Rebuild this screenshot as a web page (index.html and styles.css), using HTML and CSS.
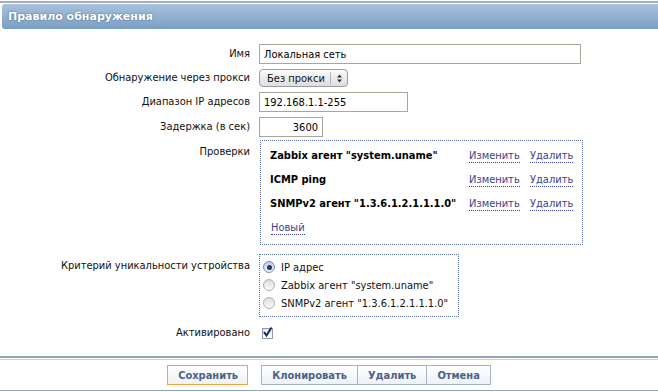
FILE: index.html
```html
<!DOCTYPE html>
<html lang="ru">
<head>
    <meta charset="UTF-8">
    <title>Правило обнаружения</title>
    <link rel="stylesheet" href="styles.css">
</head>
<body>
    <div class="top-rule"></div>
    <div class="header">Правило обнаружения</div>

    <div class="form">
        <div class="row">
            <div class="label">Имя</div>
            <div class="field"><input class="text name" type="text" value="Локальная сеть"></div>
        </div>
        <div class="row row-select">
            <div class="label">Обнаружение через прокси</div>
            <div class="field">
                <div class="select">
                    <span class="select-text">Без прокси</span>
                    <span class="select-arrows">
                        <svg width="7" height="9" viewBox="0 0 7 9"><path d="M3.5 0.5 L6 3.5 L1 3.5 Z M3.5 8.5 L6 5.5 L1 5.5 Z" fill="#333"/></svg>
                    </span>
                </div>
            </div>
        </div>
        <div class="row">
            <div class="label">Диапазон IP адресов</div>
            <div class="field"><input class="text iprange" type="text" value="192.168.1.1-255"></div>
        </div>
        <div class="row row-delay">
            <div class="label">Задержка (в сек)</div>
            <div class="field"><input class="text delay" type="text" value="3600"></div>
        </div>
        <div class="row row-box">
            <div class="label">Проверки</div>
            <div class="field">
                <div class="box checks">
                    <div class="check-name">Zabbix агент "system.uname"</div>
                    <div><a class="link" href="#">Изменить</a></div>
                    <div><a class="link" href="#">Удалить</a></div>
                    <div class="check-name">ICMP ping</div>
                    <div><a class="link" href="#">Изменить</a></div>
                    <div><a class="link" href="#">Удалить</a></div>
                    <div class="check-name">SNMPv2 агент "1.3.6.1.2.1.1.1.0"</div>
                    <div><a class="link" href="#">Изменить</a></div>
                    <div><a class="link" href="#">Удалить</a></div>
                    <div class="check-new"><a class="link" href="#">Новый</a></div>
                </div>
            </div>
        </div>
        <div class="row row-box row-criteria">
            <div class="label">Критерий уникальности устройства</div>
            <div class="field">
                <div class="box criteria">
                    <div class="radio-row"><span class="radio checked"></span>IP адрес</div>
                    <div class="radio-row"><span class="radio"></span>Zabbix агент "system.uname"</div>
                    <div class="radio-row"><span class="radio"></span>SNMPv2 агент "1.3.6.1.2.1.1.1.0"</div>
                </div>
            </div>
        </div>
        <div class="row row-active">
            <div class="label">Активировано</div>
            <div class="field">
                <span class="checkbox">
                    <svg width="11" height="11" viewBox="0 0 11 11"><path d="M2 5 L4.5 8.5 L9.5 0.5" fill="none" stroke="#1a2a66" stroke-width="2"/></svg>
                </span>
            </div>
        </div>
    </div>

    <div class="footer">
        <div class="footer-inner">
            <button class="btn btn-main">Сохранить</button>
            <div class="btn-group">
                <button class="btn">Клонировать</button>
                <button class="btn">Удалить</button>
                <button class="btn">Отмена</button>
            </div>
        </div>
    </div>
</body>
</html>
```

FILE: styles.css
```css
body, html {
    margin: 0;
    padding: 0;
    background-color: #fff;
    font-family: "DejaVu Sans Condensed", "DejaVu Sans", sans-serif;
    font-size: 11px;
    color: #111;
}
.top-rule {
    margin-top: 1px;
    height: 2px;
    background-color: #a3afc0;
}
.header {
    margin: 1px 0 0 2px;
    height: 25px;
    line-height: 25px;
    padding-left: 6px;
    border-radius: 3px 0 0 3px;
    background: linear-gradient(#a9c1da, #7a9fc4);
    color: #fff;
    font-family: "DejaVu Sans", sans-serif;
    font-weight: bold;
    font-size: 11px;
    text-shadow: 0 0 2px #3f5d80;
}
.form {
    padding-top: 15px;
}
.row {
    display: grid;
    grid-template-columns: 250px 1fr;
    column-gap: 9px;
    margin-bottom: 5px;
}
.label {
    text-align: right;
    line-height: 20px;
}
.field {
    display: flex;
    align-items: center;
}
.text {
    box-sizing: border-box;
    height: 20px;
    border: 1px solid #a8a698;
    padding: 0 4px;
    font-family: inherit;
    font-size: 11px;
    color: #000;
    outline: none;
}
.name { width: 322px; }
.iprange { width: 149px; }
.delay { width: 64px; text-align: right; }
.row-select .label { line-height: 18px; }
.select {
    box-sizing: border-box;
    width: 89px;
    height: 18px;
    border: 1px solid #9c9c9c;
    border-radius: 4px;
    background: linear-gradient(#fbfbfb, #dedede);
    display: flex;
    align-items: center;
}
.select-text {
    flex: 1;
    padding-left: 7px;
    color: #111;
}
.select-arrows {
    width: 16px;
    height: 12px;
    border-left: 1px solid #b5b5b5;
    display: flex;
    align-items: center;
    justify-content: center;
}
.row-delay { margin-bottom: 3px; }
.row-box .label { padding-top: 2px; }
.row-box .field { align-items: flex-start; }
.box {
    box-sizing: border-box;
    border: 1px dotted #5e72a8;
}
.checks {
    margin-left: 1px;
    width: 323px;
    padding: 2px 10px 5px 9px;
    display: grid;
    grid-template-columns: 199px 61px auto;
    grid-auto-rows: 24px;
    align-items: center;
}
.check-name {
    font-weight: bold;
    color: #000;
}
.check-new {
    grid-column: 1 / 4;
    padding-left: 1px;
}
.link {
    color: #3b3f8f;
    text-decoration: none;
    border-bottom: 1px dotted #3b3f8f;
}
.row-criteria { margin-top: 9px; margin-bottom: 6px; }
.criteria {
    width: 200px;
    padding: 3px 0 4px 3px;
}
.radio-row {
    height: 18px;
    display: flex;
    align-items: center;
    color: #111;
}
.radio {
    box-sizing: border-box;
    width: 12px;
    height: 12px;
    border-radius: 50%;
    border: 1px solid #b0b0b0;
    background: linear-gradient(#dcdcdc, #fdfdfd);
    margin-right: 6px;
    display: flex;
    align-items: center;
    justify-content: center;
}
.radio.checked {
    border-color: #7c8fb0;
    background: linear-gradient(#b9cbe6, #eef3fa);
}
.radio.checked::after {
    content: "";
    width: 5px;
    height: 5px;
    border-radius: 50%;
    background: #253a6a;
}
.checkbox {
    box-sizing: border-box;
    margin-left: 3px;
    width: 11px;
    height: 11px;
    border: 1px solid #8d9ab3;
    background: linear-gradient(#e3e9f3, #ffffff);
    display: flex;
    align-items: center;
    justify-content: center;
    overflow: visible;
}
.checkbox svg { flex: none; margin-top: -2px; }
.footer {
    margin-top: 13px;
    border-top: 2px solid #93a5bb;
    border-bottom: 1px solid #94a4b8;
}
.footer-inner {
    margin-top: 1px;
    border-top: 1px solid #c3cedb;
    padding: 5px 0 5px;
    display: flex;
    justify-content: center;
    gap: 13px;
}
.btn-group {
    display: flex;
}
.btn {
    box-sizing: border-box;
    height: 20px;
    padding: 0 10px;
    border: 1px solid #a3b5ca;
    background: linear-gradient(#ffffff, #edf1f6);
    color: #4a6488;
    font-family: "DejaVu Sans Condensed", "DejaVu Sans", sans-serif;
    font-weight: bold;
    font-size: 11px;
    cursor: pointer;
}
.btn-group .btn + .btn { border-left: none; }
.btn-main {
    border-color: #f5a43c;
    width: 81px;
}
```
